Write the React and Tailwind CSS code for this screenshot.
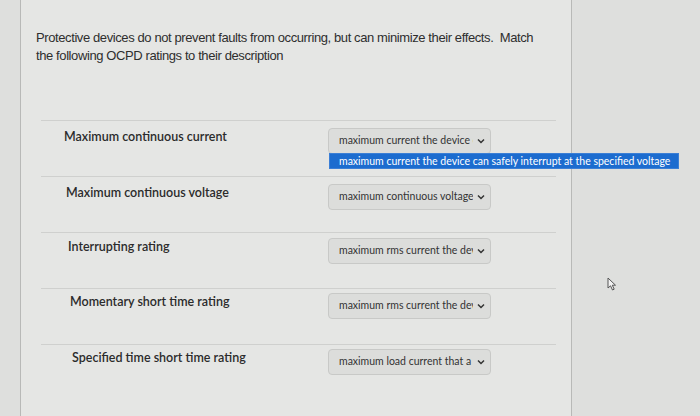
import React from 'react';

const rows = [
  { label: 'Maximum continuous current', value: 'maximum current the device can safely carry continuously', pl: 'pl-[23px]', pt: 'pt-[7px]' },
  { label: 'Maximum continuous voltage', value: 'maximum continuous voltage', pl: 'pl-[25px]', pt: 'pt-[7px]' },
  { label: 'Interrupting rating', value: 'maximum rms current the device can carry', pl: 'pl-[27px]', pt: 'pt-[5px]' },
  { label: 'Momentary short time rating', value: 'maximum rms current the device can withstand', pl: 'pl-[29px]', pt: 'pt-[4px]' },
  { label: 'Specified time short time rating', value: 'maximum load current that a device can carry', pl: 'pl-[31px]', pt: 'pt-[4px]' },
];

const Chevron = () => (
  <svg width="8" height="6" viewBox="0 0 8 6" className="shrink-0">
    <path d="M1 1.5 L4 4.5 L7 1.5" fill="none" stroke="#333" strokeWidth="1.5" />
  </svg>
);

const Select = ({ value }) => (
  <div className="w-[163px] h-[26px] flex items-center pl-[10px] pr-[5px] bg-[#dcdddb] border border-[#c8c9c7] rounded-sm">
    <span className="w-[134px] overflow-hidden whitespace-nowrap text-[10.5px] text-[#333] font-['Lato',sans-serif]">{value}</span>
    <span className="ml-auto"><Chevron /></span>
  </div>
);

const App = () => {
  return (
    <div className="w-[700px] h-[416px] bg-[#dedfdd] overflow-hidden relative font-['Liberation_Sans',sans-serif]">
      <div className="ml-[20px] w-[552px] h-full bg-[#e5e6e4] border-l border-r border-[#b8b9b7]">
        <p className="pl-[15px] pt-[29px] text-[13px] leading-[18px] tracking-[-0.4px] text-[#2e2e2e] w-[530px]">
          Protective devices do not prevent faults from occurring, but can minimize their effects.&nbsp; Match the following OCPD ratings to their description
        </p>

        <div className="mt-[55px] ml-[20px] mr-[15px]">
          {rows.map((row, i) => (
            <div key={i} className={`h-[56px] flex border-t border-[#cfd0ce] ${row.pt}`}>
              <div className={`w-[287px] ${row.pl} pt-[1px] text-[12.5px] leading-[16px] font-semibold text-[#2b2b2b] font-['Lato',sans-serif]`}>
                {row.label}
              </div>
              <div className="relative">
                <Select value={row.value} />
                {i === 0 && (
                  <div className="absolute left-[1px] top-[25px] w-[350px] h-[16px] bg-[#1c6ccf] text-white text-[10.5px] leading-[14px] pl-[9px] whitespace-nowrap font-['Lato',sans-serif] border border-[#3b7fd6]">
                    maximum current the device can safely interrupt at the specified voltage
                  </div>
                )}
              </div>
            </div>
          ))}
        </div>
      </div>

      {/* mouse cursor */}
      <svg className="absolute left-[607px] top-[277px]" width="12" height="14" viewBox="0 0 12 14">
        <path d="M1 1 L1 11 L3.5 8.8 L5.5 13 L7.2 12.2 L5.3 8.2 L8.5 8.2 Z" fill="#f2f2f2" stroke="#555" strokeWidth="1" />
      </svg>
    </div>
  );
};

export default App;
